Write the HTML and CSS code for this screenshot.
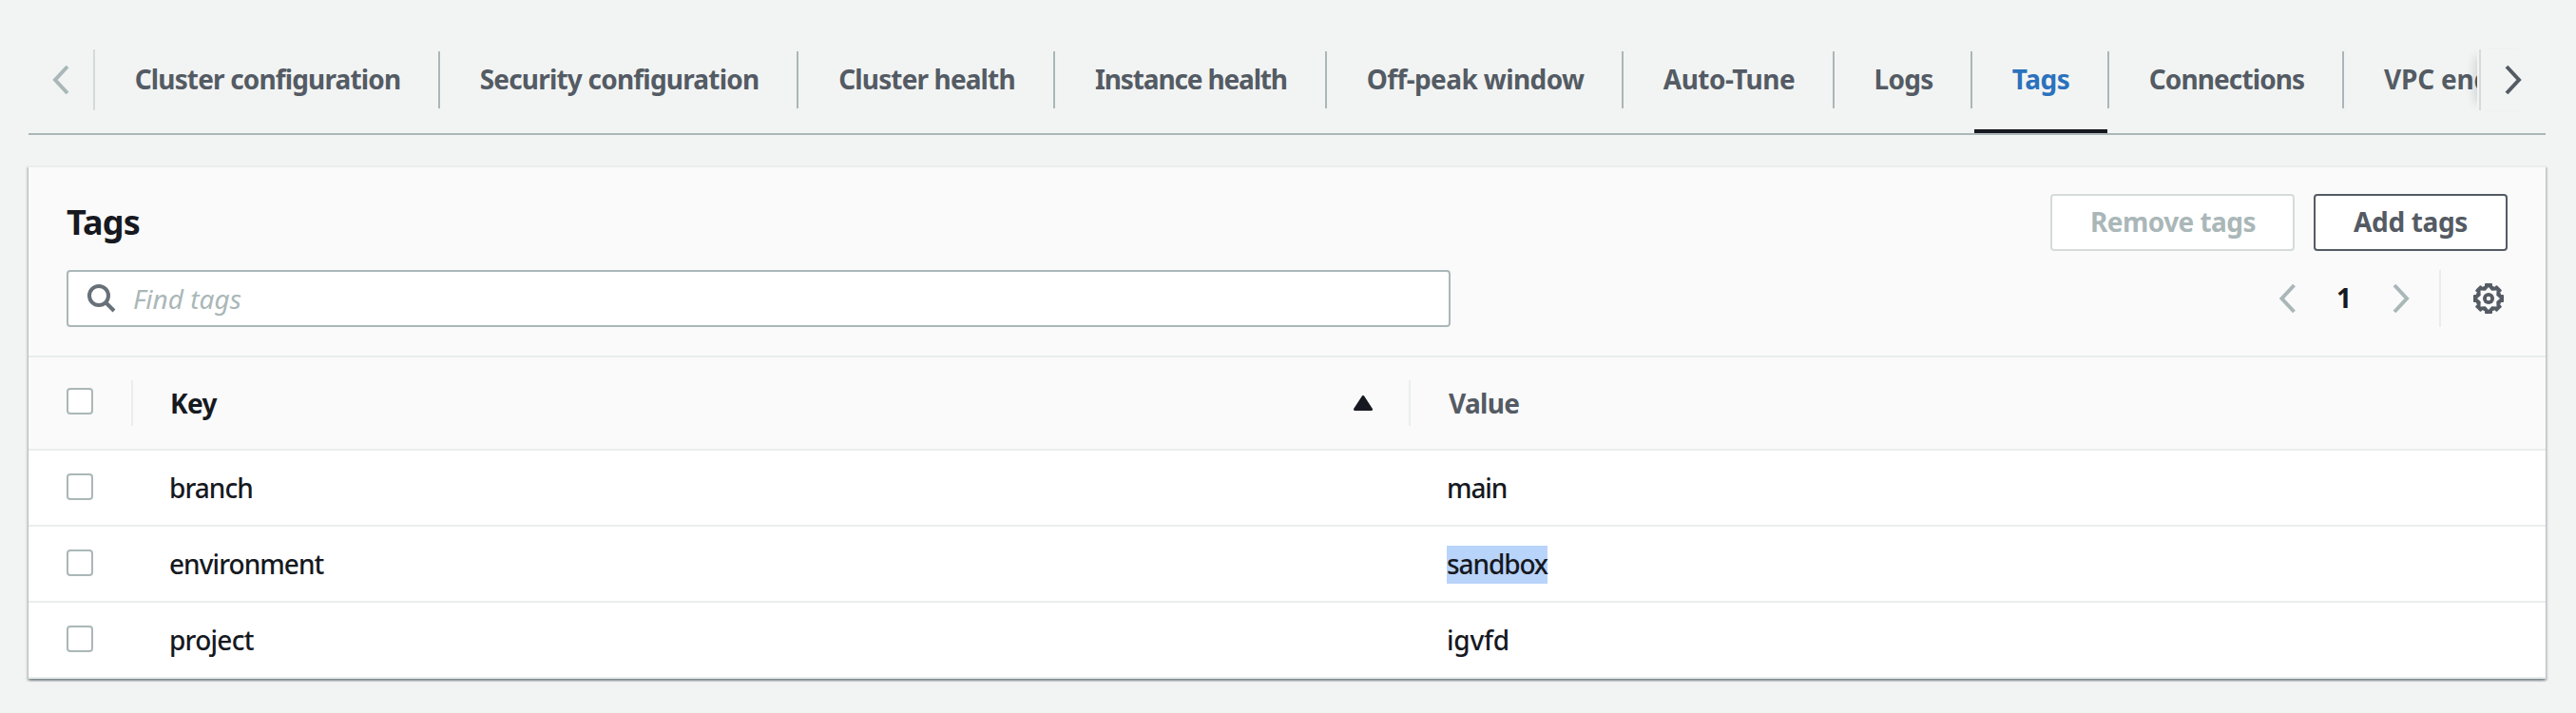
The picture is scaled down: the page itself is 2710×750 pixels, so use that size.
FILE: index.html
```html
<!DOCTYPE html>
<html lang="en">
<head>
<meta charset="utf-8">
<title>Tags</title>
<link rel="stylesheet" href="styles.css">
</head>
<body>
<nav class="tabs">
  <button class="scroll scroll-left" aria-label="Scroll left"><svg class="chevron" viewBox="0 0 20 32"><path d="M18 2 5 16 18 30"/></svg></button>
  <div class="tab-list">
    <a class="tab w-cluster">Cluster configuration</a>
    <a class="tab w-security">Security configuration</a>
    <a class="tab w-health">Cluster health</a>
    <a class="tab w-instance">Instance health</a>
    <a class="tab w-offpeak">Off-peak window</a>
    <a class="tab w-autotune">Auto-Tune</a>
    <a class="tab w-logs">Logs</a>
    <a class="tab w-tags active">Tags</a>
    <a class="tab w-connections">Connections</a>
    <a class="tab w-vpc">VPC endpoints</a>
  </div>
  <button class="scroll scroll-right" aria-label="Scroll right"><svg class="chevron" viewBox="0 0 20 32"><path d="M3 2 16 16 3 30"/></svg></button>
</nav>
<main class="panel">
  <header class="panel-head">
    <div class="title-row">
      <h2 class="title">Tags</h2>
      <div class="actions">
        <button class="btn btn-remove" disabled>Remove tags</button>
        <button class="btn btn-add">Add tags</button>
      </div>
    </div>
    <div class="tool-row">
      <div class="search">
        <svg class="search-icon" viewBox="0 0 30 30"><circle cx="12" cy="12" r="10"/><path d="M19 19 28 28"/></svg>
        <span class="placeholder">Find tags</span>
      </div>
      <div class="pager">
        <svg class="chevron page-arrow" viewBox="0 0 20 32"><path d="M18.500 2 5.500 16 18.500 30"/></svg>
        <span class="page">1</span>
        <svg class="chevron page-arrow" viewBox="0 0 20 32"><path d="M2 2 15 16 2 30"/></svg>
        <span class="pager-line"></span>
        <svg class="gear" viewBox="-16 -16 32 32">
          <circle r="13.7"/>
          <rect x="-4" y="-16" width="8" height="32" rx="1"/>
          <rect x="-16" y="-4" width="32" height="8" rx="1"/>
          <rect x="-4" y="-16" width="8" height="32" rx="1" transform="rotate(45)"/>
          <rect x="-4" y="-16" width="8" height="32" rx="1" transform="rotate(-45)"/>
          <path class="gear-hole" d="M0-12 3.3-8.3 8.5-8.5 8.3-3.3 12 0 8.3 3.3 8.5 8.5 3.3 8.3 0 12-3.3 8.3-8.5 8.5-8.3 3.3-12 0-8.3-3.3-8.5-8.5-3.3-8.3Z"/>
          <circle r="6"/>
          <circle class="gear-hole" r="2.2"/>
        </svg>
      </div>
    </div>
  </header>
  <div class="row head">
    <div class="check-cell"><span class="box"></span></div>
    <div class="key-cell"><span class="key-label">Key</span><svg class="sort" viewBox="0 0 20 16"><path d="M10 1.5 18.5 14.5H1.5Z"/></svg></div>
    <div class="value-cell">Value</div>
  </div>
  <div class="row">
    <div class="check-cell"><span class="box"></span></div>
    <div class="key-cell t-branch">branch</div>
    <div class="value-cell t-main">main</div>
  </div>
  <div class="row">
    <div class="check-cell"><span class="box"></span></div>
    <div class="key-cell t-environment">environment</div>
    <div class="value-cell"><span class="selected">sandbox</span></div>
  </div>
  <div class="row">
    <div class="check-cell"><span class="box"></span></div>
    <div class="key-cell t-project">project</div>
    <div class="value-cell t-igvfd">igvfd</div>
  </div>
</main>
</body>
</html>
```
FILE: styles.css
```css
* { box-sizing: border-box; }
body {
  margin: 0;
  height: 750px;
  padding: 52px 32px 0 30px;
  background: #f2f4f3;
  color: #16191f;
  font: 500 28px/40px "Noto Sans", "Open Sans", sans-serif;
  overflow: hidden;
}
svg { display: block; flex: none; }
button { font: inherit; margin: 0; padding: 0; }

/* Tab bar */
.tabs {
  display: flex;
  height: 90px;
  border-bottom: 2px solid #aab7b8;
}
.scroll {
  display: flex;
  align-items: center;
  flex: none;
  width: 70px;
  height: 64px;
  border: 0 solid #d5dbdb;
  background: #f2f4f3;
}
.scroll-left { border-right-width: 2px; padding-left: 23px; color: #aab7b8; }
.scroll-right {
  border-left-width: 2px;
  padding-left: 24px;
  color: #545b64;
  box-shadow: -2px 0 0 #f2f4f3, -12px 0 10px -8px rgba(0, 28, 36, .16);
  z-index: 1;
}
.chevron {
  width: 20px;
  height: 32px;
  fill: none;
  stroke: currentColor;
  stroke-width: 4;
}
.tab-list {
  display: flex;
  flex: 1;
  min-width: 0;
  padding-top: 2px;
  overflow: hidden;
}
.tab {
  position: relative;
  flex: none;
  height: 60px;
  padding-left: 2px;
  border-right: 2px solid #aab7b8;
  color: #545b64;
  font-weight: 700;
  line-height: 58px;
  text-align: center;
  white-space: nowrap;
}
.w-cluster { width: 363px; letter-spacing: -.85px; }
.w-security { width: 377px; letter-spacing: -.8px; }
.w-health { width: 270px; letter-spacing: -.87px; }
.w-instance { width: 286px; letter-spacing: -1.15px; }
.w-offpeak { width: 312px; letter-spacing: -.6px; }
.w-autotune { width: 222px; letter-spacing: -.5px; }
.w-logs { width: 145px; letter-spacing: -.7px; }
.w-tags { width: 144px; letter-spacing: -.5px; }
.w-connections { width: 247px; letter-spacing: -.9px; }
.w-vpc { width: 270px; padding-left: 42px; text-align: left; letter-spacing: -.2px; }
.active { color: #2b72bd; }
.active::after {
  content: "";
  position: absolute;
  left: 2px;
  right: 0;
  bottom: -26px;
  height: 4px;
  background: #16191f;
}

/* Panel */
.panel {
  margin-top: 32px;
  border-top: 2px solid #eaeded;
  background: #fff;
  box-shadow: 0 2px 2px rgba(0, 28, 36, .3), 2px 2px 2px rgba(0, 28, 36, .15), -2px 2px 2px rgba(0, 28, 36, .15);
}
.panel-head {
  height: 200px;
  padding: 28px 40px 0;
  border-bottom: 2px solid #eaeded;
  background: #fafafa;
}
.title-row, .tool-row {
  display: flex;
  align-items: center;
  justify-content: space-between;
  height: 60px;
}
.tool-row { margin-top: 20px; }
.title { margin: 0; font-size: 36px; font-weight: 700; line-height: 60px; letter-spacing: -.8px; }
.actions { display: flex; gap: 20px; }
.btn {
  height: 60px;
  padding-bottom: 2px;
  border: 2px solid #545b64;
  border-radius: 4px;
  background: #fff;
  color: #545b64;
  font-weight: 700;
}
.btn-remove { width: 257px; padding-left: 1px; border-color: #d5dbdb; color: #aab7b8; letter-spacing: -.55px; }
.btn-add { width: 204px; letter-spacing: -.35px; }
.search {
  display: flex;
  align-items: center;
  gap: 18px;
  width: 1456px;
  height: 60px;
  padding-left: 20px;
  border: 2px solid #aab7b8;
  border-radius: 4px;
  background: #fff;
}
.search-icon { width: 30px; height: 30px; fill: none; stroke: #687078; stroke-width: 4; }
.placeholder { color: #aab7b8; font-style: italic; font-weight: 400; }
.pager { display: flex; align-items: center; height: 60px; padding-right: 4px; }
.page-arrow { color: #aab7b8; }
.page { width: 102px; padding-bottom: 2px; font-weight: 700; text-align: center; }
.pager-line { width: 2px; height: 60px; margin: 0 34px 0 29px; background: #eaeded; }
.gear { width: 32px; height: 32px; fill: #545b64; }
.gear-hole { fill: #fafafa; }

/* Table */
.row {
  display: flex;
  align-items: center;
  height: 80px;
  border-bottom: 2px solid #eaeded;
}
.check-cell { width: 110px; padding-left: 40px; }
.box {
  display: block;
  width: 28px;
  height: 28px;
  margin-bottom: 2px;
  border: 2px solid #aab7b8;
  border-radius: 4px;
  background: #fff;
}
.key-cell { width: 1344px; padding-left: 38px; }
.value-cell { padding-left: 38px; }
.head { height: 98px; background: #fafafa; font-weight: 700; }
.head .check-cell { border-right: 2px solid #eaeded; }
.head .check-cell, .head .key-cell { display: flex; align-items: center; height: 48px; }
.head .key-cell { justify-content: space-between; padding-left: 39px; padding-right: 38px; border-right: 2px solid #eaeded; }
.head .value-cell { padding-left: 40px; color: #545b64; letter-spacing: -.7px; }
.head .box { margin-bottom: 4px; }
.key-label { letter-spacing: -.6px; }
.sort { width: 20px; height: 16px; fill: #16191f; stroke: #16191f; stroke-width: 3; stroke-linejoin: round; }
.selected {
  display: block;
  height: 40px;
  margin-top: 2px;
  background: #b9d4fb;
  line-height: 38px;
  letter-spacing: -1.1px;
}
.t-branch { letter-spacing: -.95px; }
.t-main { letter-spacing: -1.1px; }
.t-environment { letter-spacing: -.95px; }
.t-project { letter-spacing: -.75px; }
.t-igvfd { letter-spacing: -.2px; }
```
